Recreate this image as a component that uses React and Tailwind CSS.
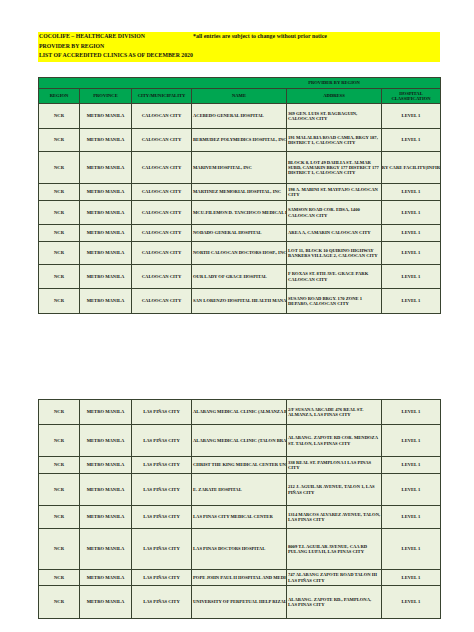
import React from "react";

const t1 = [
  { h: 25, name: "ACEBEDO GENERAL HOSPITAL", addr: "369 GEN. LUIS ST. BAGBAGUIN, CALOOCAN CITY" },
  { h: 23, name: "BERMUDEZ POLYMEDICS HOSPITAL, INC", addr: "191 MALALRIA ROAD CAMIA, BRGY 187, DISTRICT 1, CALOOCAN CITY" },
  { h: 32, name: "MARIVEM HOSPITAL, INC", addr: "BLOCK 8, LOT 49 DAHLIA ST. ALMAR SUBD, CAMARIN BRGY 177 DISTRICT 177 DISTRICT 1, CALOOCAN CITY", cls: "PRIMARY CARE FACILITY(INFIRMARY)" },
  { h: 17, name: "MARTINEZ MEMORIAL HOSPITAL, INC", addr: "198 A. MABINI ST. MAYPAJO CALOOCAN CITY" },
  { h: 24, name: "MCU-FILEMON D. TANCHOCO MEDICAL FOUNDATION", addr: "SAMSON ROAD COR. EDSA, 1400 CALOOCAN CITY" },
  { h: 17, name: "NODADO GENERAL HOSPITAL", addr: "AREA A, CAMARIN CALOOCAN CITY" },
  { h: 23, name: "NORTH CALOOCAN DOCTORS HOSP., INC", addr: "LOT 11, BLOCK 10 QUIRINO HIGHWAY BANKERS VILLAGE 2, CALOOCAN CITY" },
  { h: 24, name: "OUR LADY OF GRACE HOSPITAL", addr: "F ROXAS ST. 8TH AVE. GRACE PARK CALOOCAN CITY" },
  { h: 25, name: "SAN LORENZO HOSPITAL HEALTH MANAGEMENT", addr: "SUSANO ROAD BRGY. 170 ZONE 1 DEPARO, CALOOCAN CITY" },
];

const t2 = [
  { h: 25, name: "ALABANG MEDICAL CLINIC (ALMANZA BRANCH)", addr: "2/F SUSANA ARCADE 476 REAL ST. ALMANZA, LAS PINAS CITY" },
  { h: 32, name: "ALABANG MEDICAL CLINIC (TALON BRANCH)", addr: "ALABANG- ZAPOTE RD COR. MENDOZA ST. TALON, LAS PINAS CITY" },
  { h: 17, name: "CHRIST THE KING MEDICAL CENTER UNIHEALTH", addr: "338 REAL ST. PAMPLONA I LAS PINAS CITY" },
  { h: 32, name: "E. ZARATE HOSPITAL", addr: "212 J. AGUILAR AVENUE, TALON 1, LAS PIÑAS CITY" },
  { h: 23, name: "LAS PINAS CITY MEDICAL CENTER", addr: "1314 MARCOS ALVAREZ AVENUE, TALON, LAS PINAS CITY" },
  { h: 41, name: "LAS PINAS DOCTORS HOSPITAL", addr: "8009 T.I. AGUILAR AVENUE, CAA RD PULANG LUPA II, LAS PINAS CITY" },
  { h: 16, name: "POPE JOHN PAUL II HOSPITAL AND MEDICAL CENTER", addr: "747 ALABANG ZAPOTE ROAD TALON III LAS PIÑAS CITY" },
  { h: 33, name: "UNIVERSITY OF PERPETUAL HELP RIZAL", addr: "ALABANG- ZAPOTE RD., PAMPLONA, LAS PINAS CITY" },
];

const cell = "border border-[#38432f] p-0 align-middle";

const Cols = () => (
  <colgroup>
    <col className="w-[41px]" />
    <col className="w-[52px]" />
    <col className="w-[60px]" />
    <col className="w-[95px]" />
    <col className="w-[95px]" />
    <col className="w-[59px]" />
  </colgroup>
);

const Row = ({ r, city }) => (
  <tr style={{ height: r.h }} className="bg-[#ebf1de]">
    <td className={`${cell} text-center`}>NCR</td>
    <td className={`${cell} text-center`}>METRO MANILA</td>
    <td className={`${cell} text-center`}>{city}</td>
    <td className={cell}>
      <div className="overflow-hidden whitespace-nowrap pl-px">{r.name}</div>
    </td>
    <td className={cell}>
      <div className="pl-px">{r.addr}</div>
    </td>
    <td className={cell}>
      <div className="flex justify-center overflow-hidden whitespace-nowrap">
        <span className="shrink-0">{r.cls || "LEVEL 1"}</span>
      </div>
    </td>
  </tr>
);

export default function App() {
  return (
    <div className="min-h-[632px] bg-white pt-[32px] pl-[38px] text-[#111] font-['Liberation_Serif',serif] font-bold">
      <div className="w-[402px] h-[30px] bg-[#ffff00] text-[5.8px] leading-[9.5px] pl-px">
        <div className="flex">
          <span className="w-[154px]">COCOLIFE – HEALTHCARE DIVISION</span>
          <span className="text-[5.9px]">*all entries are subject to change without prior notice</span>
        </div>
        <div>PROVIDER BY REGION</div>
        <div>LIST OF ACCREDITED CLINICS AS OF DECEMBER 2020</div>
      </div>

      <table className="mt-[15px] w-[402px] table-fixed border-collapse text-[4.6px] leading-[5.2px]">
        <Cols />
        <tbody>
          <tr className="h-[11px] bg-[#00a651]">
            <td className="border-y border-l border-[#38432f] p-0" colSpan={4}></td>
            <td className="border-y border-[#38432f] p-0 text-center">PROVIDER BY REGION</td>
            <td className="border-y border-r border-[#38432f] p-0"></td>
          </tr>
          <tr className="h-[15px] bg-[#00a651] text-center">
            <td className={cell}>REGION</td>
            <td className={cell}>PROVINCE</td>
            <td className={cell}>CITY/MUNICIPALITY</td>
            <td className={cell}>NAME</td>
            <td className={cell}>ADDRESS</td>
            <td className={cell}>
              HOSPITAL
              <br />
              CLASSIFICATION
            </td>
          </tr>
          {t1.map((r, i) => (
            <Row key={i} r={r} city="CALOOCAN CITY" />
          ))}
        </tbody>
      </table>

      <table className="mt-[85px] w-[402px] table-fixed border-collapse text-[4.6px] leading-[5.2px]">
        <Cols />
        <tbody>
          {t2.map((r, i) => (
            <Row key={i} r={r} city="LAS PIÑAS CITY" />
          ))}
        </tbody>
      </table>
    </div>
  );
}
